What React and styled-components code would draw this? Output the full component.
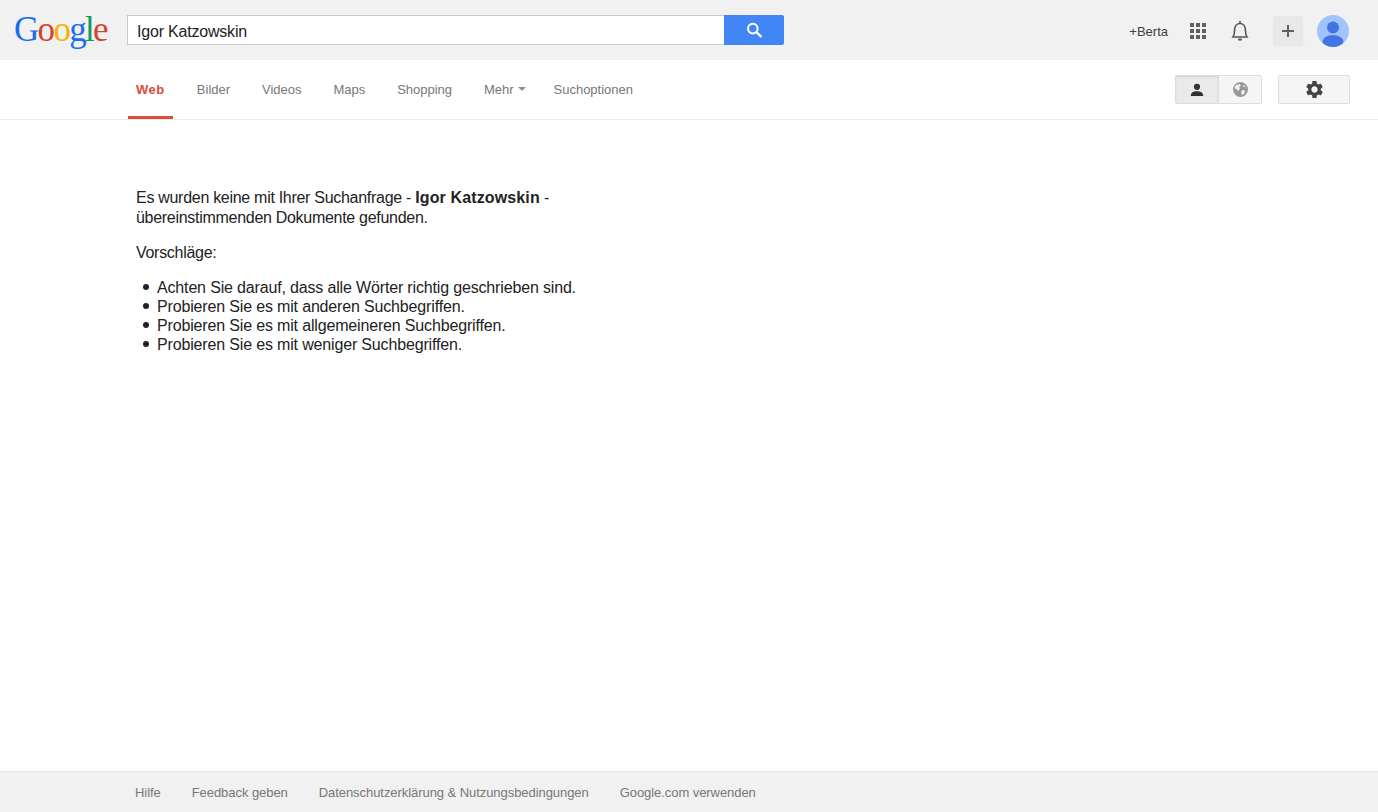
import React from "react";
import styled, { createGlobalStyle } from "styled-components";

const Global = createGlobalStyle`
  html, body { margin: 0; padding: 0; height: 100%; background: #fff; }
  body { font-family: "Liberation Sans", Arial, sans-serif; overflow: hidden; }
  #root { height: 100%; }
`;
const Page = styled.div`
  height: 812px; display: flex; flex-direction: column;
`;
const Header = styled.header`
  height: 60px; background: #f1f1f1; display: flex; align-items: flex-start; flex: none;
`;
const Logo = styled.div`
  width: 127px; padding: 8px 0 0 14px; box-sizing: border-box; flex: none;
  font-family: "Liberation Serif", serif; font-size: 35px; line-height: 44px;
  letter-spacing: -1.7px; height: 60px; white-space: nowrap;
`;
const L = styled.span`
  color: ${p => p.$c};
`;
const Search = styled.div`
  margin-top: 15px; display: flex; width: 657px; height: 30px;
`;
const Input = styled.div`
  flex: 1; box-sizing: border-box; background: #fff; border: 1px solid #c8c8c8; border-right: 0;
  font-size: 16px; line-height: 31px; padding-left: 9px; color: #222; letter-spacing: -.2px;
`;
const SearchBtn = styled.button`
  width: 60px; height: 30px; padding: 0; border: 0; border-radius: 0 2px 2px 0; background: #4285f4;
  display: flex; align-items: center; justify-content: center;
`;
const HeaderRight = styled.div`
  margin-left: auto; display: flex; align-items: center; height: 62px; padding-right: 29px;
`;
const PlusName = styled.span`
  font-size: 13px; color: #404040; margin-right: 22px;
`;
const Apps = styled.div`
  display: grid; grid-template-columns: repeat(3, 4px); grid-auto-rows: 4px; gap: 2px; width: 16px; margin-right: 25px;
`;
const Dot = styled.i`
  display: block; background: #616161;
`;
const Share = styled.div`
  position: relative; width: 30px; height: 30px; margin: 0 14px 0 24px; background: #e8e8e8; border-radius: 2px;
  display: flex; align-items: center; justify-content: center;
  &::after {
    content: ""; position: absolute; right: -3px; bottom: 0; border-left: 3px solid #e8e8e8; border-top: 3px solid transparent;
  }
`;
const Avatar = styled.div`
  width: 32px; height: 32px; flex: none;
`;
const Nav = styled.nav`
  height: 60px; flex: none; box-sizing: border-box; border-bottom: 1px solid #ebebeb;
  display: flex; padding: 0 28px 0 128px; align-items: stretch;
`;
const Tab = styled.a`
  box-sizing: border-box; padding: 2px 16px 0 ${p => p.$tight ? 12 : 16}px; font-size: 13px; height: 59px;
  color: #777; letter-spacing: -.015px;
  border-bottom: 3px solid transparent;
  display: flex; align-items: center; white-space: nowrap;
`;
const ActiveTab = styled(Tab)`
  padding: 2px 8px 0; margin-right: 8px; color: #dd4b39; font-weight: 700; letter-spacing: .55px;
  border-bottom-color: #dd4b39;
`;
const Caret = styled.i`
  display: inline-block; margin-left: 4px; border: 4px solid transparent; border-top: 4px solid #909090; border-bottom: 0; 
`;
const Tools = styled.div`
  margin-left: auto; display: flex; align-items: flex-start; padding-top: 15px;
`;
const Toggle = styled.div`
  display: flex; height: 29px; box-sizing: border-box; margin-right: 16px;
`;
const ToggleBtn = styled.div`
  box-sizing: border-box; width: ${p => p.$on ? 44 : 43}px; height: 29px; display: flex; align-items: center; justify-content: center;
  border: 1px solid #dcdcdc; border-left-width: ${p => p.$on ? 1 : 0}px;
  border-radius: ${p => p.$on ? "2px 0 0 2px" : "0 2px 2px 0"};
  background: ${p => p.$on ? "#eaeaea" : "#f5f5f5"};
  box-shadow: ${p => p.$on ? "inset 0 1px 2px rgba(0,0,0,.1)" : "none"};
`;
const GearBtn = styled.div`
  box-sizing: border-box; width: 72px; height: 29px; border: 1px solid #dcdcdc; border-radius: 2px; background: #f5f5f5;
  display: flex; align-items: center; justify-content: center;
`;
const Main = styled.main`
  flex: 1; padding: 68px 0 0 136px; font-size: 16px; color: #222; line-height: 20px;
`;
const Para = styled.p`
  margin: 0 0 15px; width: 440px; letter-spacing: -.29px;
  b { letter-spacing: .13px; }
`;
const List = styled.ul`
  margin: 15px 0 0; padding: 0 0 0 21px; line-height: 19px; letter-spacing: -.16px; list-style: none;
`;
const Item = styled.li`
  position: relative;
  &::before {
    content: ""; position: absolute; left: -14px; top: 6px; width: 6px; height: 6px; border-radius: 50%; background: #222;
  }
`;
const Footer = styled.footer`
  height: 41px; flex: none; box-sizing: border-box; background: #f1f1f1; border-top: 1px solid #e4e4e4;
  display: flex; gap: 31px; padding-left: 135px; align-items: center; font-size: 13px; color: #777; letter-spacing: -.06px;
`;

const logo = [["G", "#1a6cf0"], ["o", "#d9412f"], ["o", "#f5b400"], ["g", "#1a6cf0"], ["l", "#109a58"], ["e", "#d9412f"]];

export default function App() {
  return (
    <Page>
      <Global />
      <Header>
        <Logo>{logo.map(([t, c], i) => <L key={i} $c={c}>{t}</L>)}</Logo>
        <Search>
          <Input>Igor Katzowskin</Input>
          <SearchBtn aria-label="Suche">
            <svg width="17" height="17" viewBox="0 0 17 17" fill="none" stroke="#fff">
              <circle cx="6.8" cy="6.6" r="4.8" strokeWidth="2" />
              <path d="M10.4 10.2 L15.4 15" strokeWidth="2.4" />
            </svg>
          </SearchBtn>
        </Search>
        <HeaderRight>
          <PlusName>+Berta</PlusName>
          <Apps>{Array.from({ length: 9 }, (_, i) => <Dot key={i} />)}</Apps>
          <svg width="18" height="22" viewBox="0 0 18 22" fill="none" stroke="#555" strokeWidth="1.6">
            <path d="M2 17 C3.5 15 3.6 13.5 3.6 10 C3.6 6 6 3.5 9 3.5 C12 3.500 14.400 6 14.400 10 C14.400 13.500 14.500 15 16 17 Z" />
            <path d="M9 1 V3.5" />
            <path d="M7.2 19.5 H10.8" strokeWidth="2" />
          </svg>
          <Share>
            <svg width="12" height="12" viewBox="0 0 12 12"><path d="M5 0h2v5h5v2H7v5H5V7H0V5h5z" fill="#616161" /></svg>
          </Share>
          <Avatar>
            <svg width="32" height="32" viewBox="0 0 32 32">
              <defs><clipPath id="av"><circle cx="16" cy="16" r="16" /></clipPath></defs>
              <circle cx="16" cy="16" r="16" fill="#a0c3ff" />
              <g clipPath="url(#av)" fill="#4374e0">
                <circle cx="16" cy="12.5" r="6" />
                <ellipse cx="16" cy="26.5" rx="10.5" ry="6.5" />
              </g>
            </svg>
          </Avatar>
        </HeaderRight>
      </Header>
      <Nav>
        <ActiveTab>Web</ActiveTab>
        <Tab>Bilder</Tab>
        <Tab>Videos</Tab>
        <Tab>Maps</Tab>
        <Tab>Shopping</Tab>
        <Tab>Mehr<Caret /></Tab>
        <Tab $tight>Suchoptionen</Tab>
        <Tools>
          <Toggle>
            <ToggleBtn $on>
              <svg width="14" height="14" viewBox="0 0 14 14" fill="#333">
                <circle cx="7" cy="3.8" r="3.1" />
                <path d="M0.8 13 C0.8 9.6 3.5 8.2 7 8.2 C10.5 8.2 13.2 9.6 13.2 13 Z" />
              </svg>
            </ToggleBtn>
            <ToggleBtn>
              <svg width="15" height="15" viewBox="0 0 15 15">
                <circle cx="7.5" cy="7.5" r="7.5" fill="#999" />
                <path d="M3 3.2 L6.6 2 L8 3.6 L6 5.4 L7 7 L5 9 L3.6 7.2 L1.4 6 Z M9 8 L12 8.6 L11 12 L9 13 L8.2 10.5 Z M10 2.4 L12.6 4.5 L11 5.2 Z" fill="#f2f2f2" />
              </svg>
            </ToggleBtn>
          </Toggle>
          <GearBtn>
            <svg width="21" height="21" viewBox="0 0 24 24" fill="#444">
              <path d="M19.14 12.94c.04-.3.06-.61.06-.94 0-.32-.02-.64-.07-.94l2.03-1.58c.18-.14.23-.41.12-.61l-1.92-3.32c-.12-.22-.37-.29-.59-.22l-2.39.96c-.5-.38-1.03-.7-1.62-.94l-.36-2.54c-.04-.24-.24-.41-.48-.41h-3.84c-.24 0-.43.17-.47.41l-.36 2.54c-.59.24-1.13.57-1.62.94l-2.39-.96c-.22-.08-.47 0-.59.22L2.74 8.87c-.12.21-.08.47.12.61l2.03 1.58c-.05.3-.09.63-.09.94s.02.64.07.94l-2.03 1.58c-.18.14-.23.41-.12.61l1.92 3.32c.12.22.37.29.59.22l2.39-.96c.5.38 1.03.7 1.62.94l.36 2.54c.05.24.24.41.48.41h3.84c.24 0 .44-.17.47-.41l.36-2.54c.59-.24 1.13-.56 1.62-.94l2.39.96c.22.08.47 0 .59-.22l1.92-3.32c.12-.22.07-.47-.12-.61l-2.01-1.58zM12 15.6c-1.98 0-3.6-1.62-3.6-3.6s1.62-3.6 3.6-3.6 3.6 1.62 3.6 3.6-1.62 3.6-3.6 3.6z" />
            </svg>
          </GearBtn>
        </Tools>
      </Nav>
      <Main>
        <Para>Es wurden keine mit Ihrer Suchanfrage - <b>Igor Katzowskin</b> - übereinstimmenden Dokumente gefunden.</Para>
        <Para>Vorschläge:</Para>
        <List>
          <Item>Achten Sie darauf, dass alle Wörter richtig geschrieben sind.</Item>
          <Item>Probieren Sie es mit anderen Suchbegriffen.</Item>
          <Item>Probieren Sie es mit allgemeineren Suchbegriffen.</Item>
          <Item>Probieren Sie es mit weniger Suchbegriffen.</Item>
        </List>
      </Main>
      <Footer>
        <span>Hilfe</span>
        <span>Feedback geben</span>
        <span>Datenschutzerklärung &amp; Nutzungsbedingungen</span>
        <span>Google.com verwenden</span>
      </Footer>
    </Page>
  );
}
